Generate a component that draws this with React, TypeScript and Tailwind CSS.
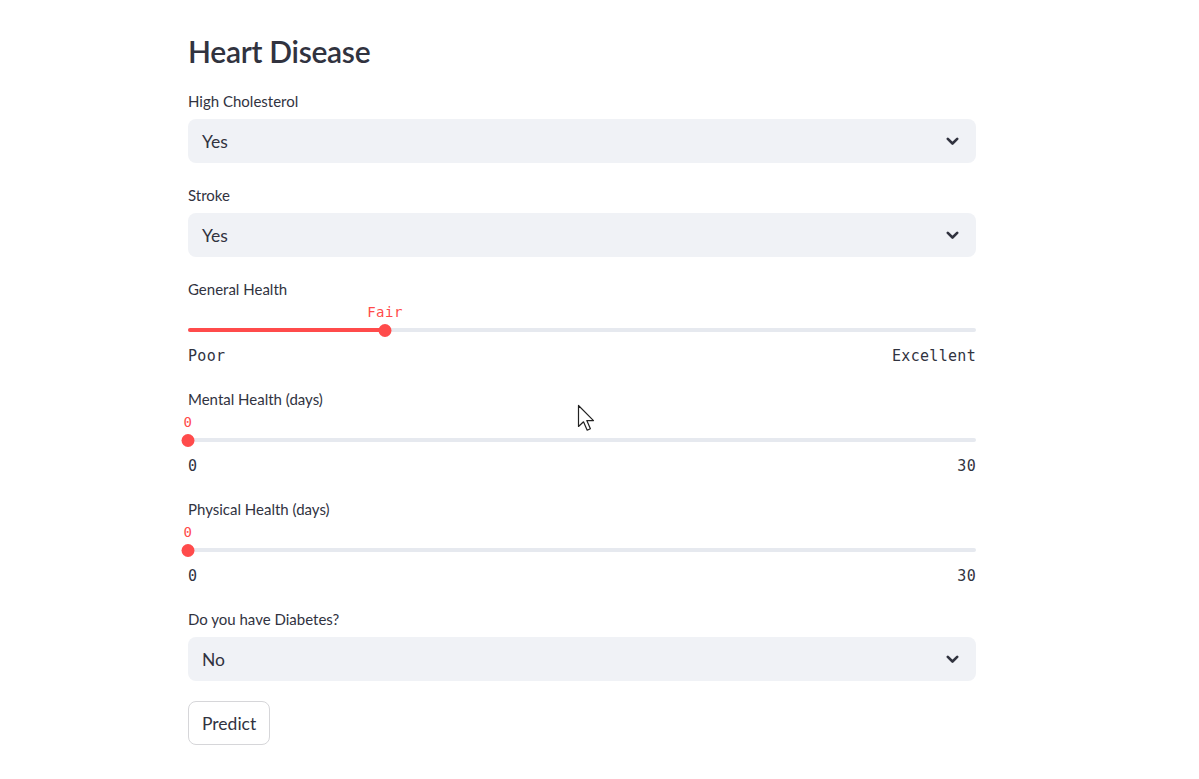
import React from "react";

const sans = "font-['Source_Sans_Pro','Lato','Noto_Sans',sans-serif]";
const mono = "font-['DejaVu_Sans_Mono','Liberation_Mono',monospace]";

const Label = ({ text }: { text: string }) => (
  <div className={`h-[22px] leading-[22px] text-[15px] text-[#31333f] ${sans}`}>{text}</div>
);

const Chevron = () => (
  <svg width="13" height="9" viewBox="0 0 13 9" fill="none">
    <path d="M1.8 1.8 L6.5 6.5 L11.2 1.8" stroke="#31333f" strokeWidth="2.6" strokeLinecap="round" strokeLinejoin="round" />
  </svg>
);

const SelectBox = ({ label, value }: { label: string; value: string }) => (
  <div className="flex flex-col gap-[7px]">
    <Label text={label} />
    <div className="h-[44px] rounded-[8px] bg-[#f0f2f6] flex items-center justify-between pl-[14px] pr-[17px]">
      <span className={`pt-[2px] text-[17.5px] text-[#31333f] ${sans}`}>{value}</span>
      <Chevron />
    </div>
  </div>
);

type SliderProps = {
  label: string;
  value: string;
  fraction: number;
  min: string;
  max: string;
};

const Slider = ({ label, value, fraction, min, max }: SliderProps) => (
  <div className="flex flex-col">
    <Label text={label} />
    <div className="h-[24px] leading-[22px]">
      <span
        className={`inline-block -translate-x-1/2 text-[14px] text-[#ff4b4b] tracking-[0.5px] ${mono}`}
        style={{ marginLeft: `${fraction * 100}%` }}
      >
        {value}
      </span>
    </div>
    <div className="relative h-[12px] flex items-center">
      <div className="w-full h-[4px] rounded-full bg-[#e6e9ef]">
        <div className="h-full rounded-full bg-[#ff4b4b]" style={{ width: `${fraction * 100}%` }} />
      </div>
      <div
        className="absolute top-[-0.5px] w-[13px] h-[13px] rounded-full bg-[#ff4b4b] -translate-x-1/2"
        style={{ left: `${fraction * 100}%` }}
      />
    </div>
    <div className={`mt-[9px] h-[22px] leading-[22px] flex justify-between text-[15px] text-[#31333f] tracking-[0.3px] ${mono}`}>
      <span>{min}</span>
      <span>{max}</span>
    </div>
  </div>
);

const Cursor = () => (
  <svg className="absolute left-[577px] top-[404px]" width="20" height="30" viewBox="0 0 20 30">
    <path
      d="M1.5 1.5 L1.5 22.5 L6.5 17.8 L10.2 26.2 L13.4 24.8 L9.8 16.6 L16.5 16.6 Z"
      fill="#ffffff"
      stroke="#222222"
      strokeWidth="1.2"
      strokeLinejoin="round"
    />
  </svg>
);

export default function App() {
  return (
    <div className="relative w-[1199px] h-[779px] bg-white overflow-hidden">
      <div className="ml-[188px] w-[788px] pt-[31px] flex flex-col items-stretch">
        <h1 className={`h-[40px] leading-[40px] text-[30px] font-semibold text-[#31333f] tracking-[-0.3px] ${sans}`}>
          Heart Disease
        </h1>
        <div className="mt-[19px] flex flex-col gap-[21px]">
          <SelectBox label="High Cholesterol" value="Yes" />
          <SelectBox label="Stroke" value="Yes" />
          <Slider label="General Health" value="Fair" fraction={0.25} min="Poor" max="Excellent" />
          <Slider label="Mental Health (days)" value="0" fraction={0} min="0" max="30" />
          <Slider label="Physical Health (days)" value="0" fraction={0} min="0" max="30" />
          <SelectBox label="Do you have Diabetes?" value="No" />
        </div>
        <div className="mt-[20px] flex">
          <button
            className={`h-[44px] px-[13px] pt-[2px] rounded-[8px] border border-[#d6d6d9] bg-white text-[17.5px] text-[#31333f] ${sans}`}
          >
            Predict
          </button>
        </div>
      </div>
      <Cursor />
    </div>
  );
}
